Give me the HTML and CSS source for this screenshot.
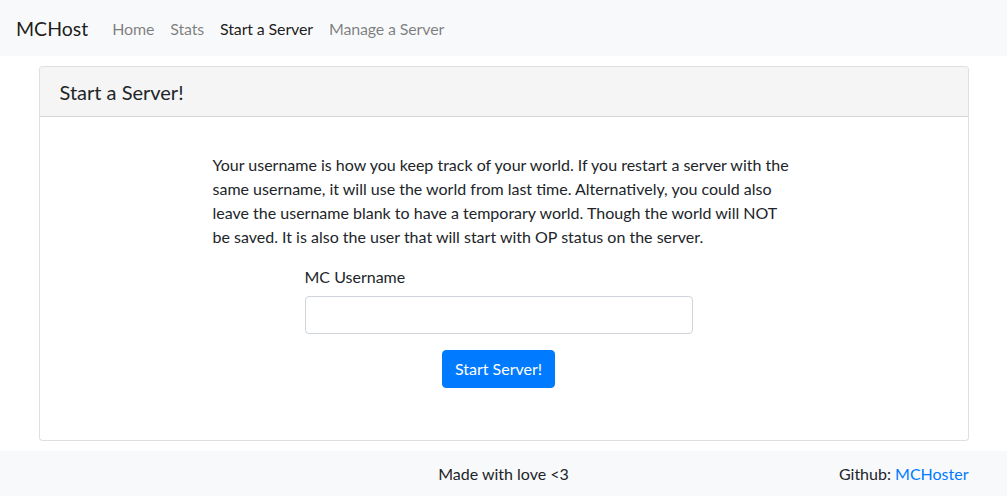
FILE: index.html
```html
<!DOCTYPE html>
<html lang="en">
<head>
<meta charset="utf-8">
<title>MCHost</title>
<link rel="stylesheet" href="styles.css">
</head>
<body>
<nav class="navbar">
  <a class="brand" href="#">MCHost</a>
  <ul class="nav">
    <li><a class="nav-link" href="#">Home</a></li>
    <li><a class="nav-link" href="#">Stats</a></li>
    <li><a class="nav-link active" href="#">Start a Server</a></li>
    <li><a class="nav-link" href="#">Manage a Server</a></li>
  </ul>
</nav>
<main class="container">
  <section class="card">
    <header class="card-header">Start a Server!</header>
    <div class="card-body">
      <p class="intro">Your username is how you keep track of your world. If you restart a server with the same username, it will use the world from last time. Alternatively, you could also leave the username blank to have a temporary world. Though the world will NOT be saved. It is also the user that will start with OP status on the server.</p>
      <form class="form">
        <label class="label" for="username">MC Username</label>
        <input class="input" id="username" type="text">
        <div class="actions">
          <button class="btn" type="button">Start Server!</button>
        </div>
      </form>
    </div>
  </section>
</main>
<footer class="footer">
  <div class="footer-inner">
    <span class="footer-spacer"></span>
    <span class="footer-center">Made with love &lt;3</span>
    <span class="footer-right">Github: <a href="#">MCHoster</a></span>
  </div>
</footer>
</body>
</html>
```
FILE: styles.css
```css
* { box-sizing: border-box; }
html, body { margin: 0; padding: 0; }
body {
  font-family: Lato, "Noto Sans", sans-serif;
  font-size: 16px;
  line-height: 1.5;
  color: #212529;
  background: #fff;
}
a { text-decoration: none; }

.navbar {
  display: flex;
  align-items: center;
  background: #f8f9fa;
  padding: 9px 16px 7px;
  height: 56px;
}
.brand {
  font-size: 19.5px;
  line-height: 30px;
  color: rgba(0,0,0,.9);
  margin-right: 16px;
}
.nav {
  display: flex;
  list-style: none;
  margin: 0;
  padding: 0;
}
.nav-link {
  display: block;
  padding: 8px;
  color: rgba(0,0,0,.5);
  letter-spacing: -0.15px;
}
.nav-link.active { color: rgba(0,0,0,.9); }

.container {
  max-width: 960px;
  margin: 10px auto 0;
  padding: 0 15px;
}
.card {
  border: 1px solid rgba(0,0,0,.125);
  border-radius: 4px;
  background: #fff;
}
.card-header {
  background: #f5f5f5;
  border-bottom: 1px solid rgba(0,0,0,.125);
  padding: 11px 20px 9px;
  font-size: 20px;
  line-height: 29px;
  border-radius: 4px 4px 0 0;
}
.card-body {
  padding: 36px 20px 52px;
  display: flex;
  flex-direction: column;
  align-items: center;
}
.intro {
  width: 582px;
  margin: 0 0 16px;
}
.form {
  width: 388px;
  margin-right: 10px;
  display: flex;
  flex-direction: column;
}
.label { margin-bottom: 7px; }
.input {
  height: 38px;
  padding: 6px 12px;
  border: 1px solid #ced4da;
  border-radius: 4px;
  font: inherit;
  margin-bottom: 16px;
}
.actions { display: flex; justify-content: center; }
.btn {
  font: inherit;
  color: #fff;
  background: #007bff;
  border: 1px solid #007bff;
  border-radius: 4px;
  padding: 6px 12px;
  height: 38px;
}

.footer {
  background: #f8f9fa;
  margin-top: 10px;
  height: 45px;
}
.footer-inner {
  max-width: 960px;
  margin: 0 auto;
  padding: 11px 15px 0;
  display: flex;
}
.footer-spacer, .footer-right { flex: 1; }
.footer-right { text-align: right; }
.footer-right a { color: #007bff; }
```
